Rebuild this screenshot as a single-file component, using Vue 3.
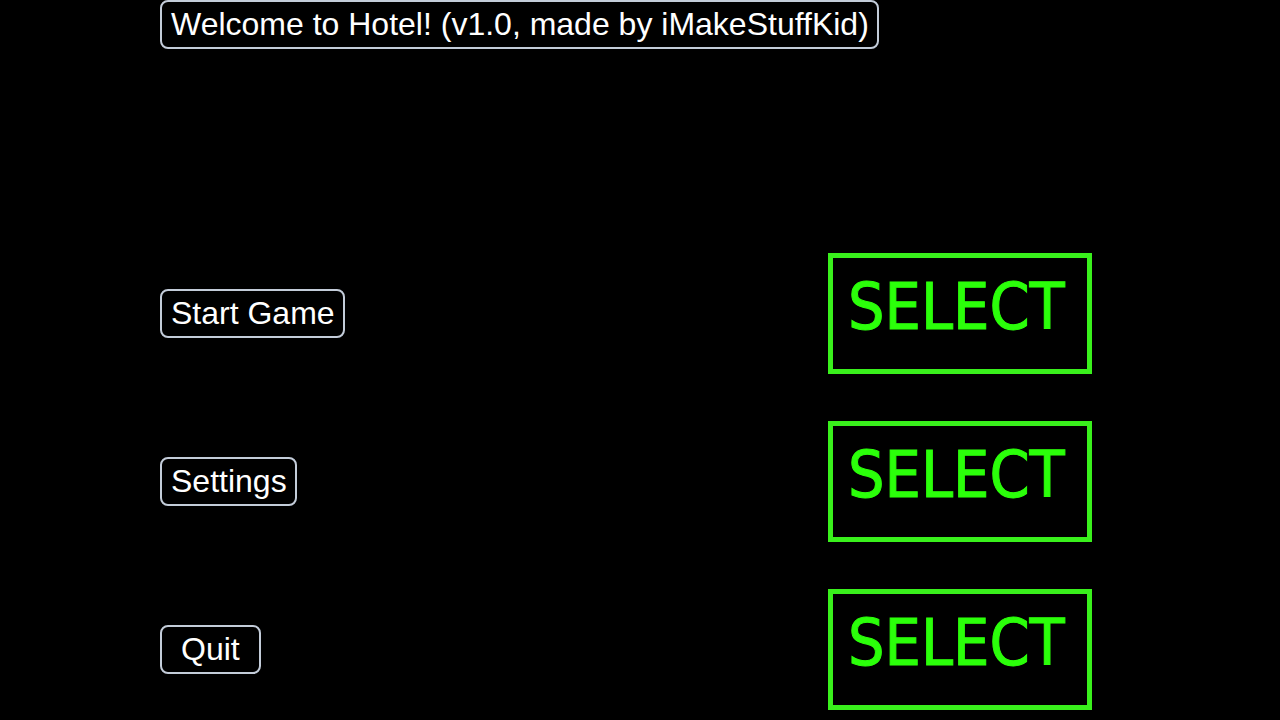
<script setup>
const items = [
  { id: 'start', label: 'Start Game' },
  { id: 'settings', label: 'Settings' },
  { id: 'quit', label: 'Quit', roomy: true },
]
</script>

<template>
  <main class="screen">
    <h1 class="tag">Welcome to Hotel! (v1.0, made by iMakeStuffKid)</h1>
    <ul class="menu">
      <li v-for="item in items" :key="item.id" class="row">
        <span :id="item.id" class="tag" :class="{ roomy: item.roomy }">{{ item.label }}</span>
        <button type="button" class="select" :aria-describedby="item.id">SELECT</button>
      </li>
    </ul>
  </main>
</template>

<style>
body {
  background: #000;
}
</style>

<style scoped>
.screen {
  box-sizing: border-box;
  min-height: 100vh;
  padding: 0 12.5%;
  display: flex;
  flex-direction: column;
  align-items: flex-start;
  gap: 204px;
  background: #000;
  color: #fff;
  font-family: "Liberation Sans", Arial, sans-serif;
}

.tag {
  box-sizing: border-box;
  margin: 0;
  padding: 0 8px 0 9px;
  border: 2px solid #c3ccd9;
  border-radius: 8px;
  font-size: 32px;
  font-weight: 400;
  line-height: 45px;
  white-space: nowrap;
}

.roomy {
  padding: 0 19px;
}

.menu {
  align-self: stretch;
  margin: 0;
  padding: 0 28px 0 0;
  display: flex;
  flex-direction: column;
  gap: 47px;
  list-style: none;
}

.row {
  display: flex;
  align-items: center;
  justify-content: space-between;
}

.select {
  box-sizing: border-box;
  width: 264px;
  height: 121px;
  padding: 0 15px 14px;
  border: 5px solid #39f01c;
  border-radius: 0;
  background: #000;
  color: #2bff0a;
  font-family: "DejaVu Sans Condensed", "DejaVu Sans Mono", monospace;
  font-size: 64px;
  line-height: 80px;
  text-align: left;
  white-space: nowrap;
  -webkit-text-stroke: 1px #2bff0a;
  cursor: pointer;
}
</style>
